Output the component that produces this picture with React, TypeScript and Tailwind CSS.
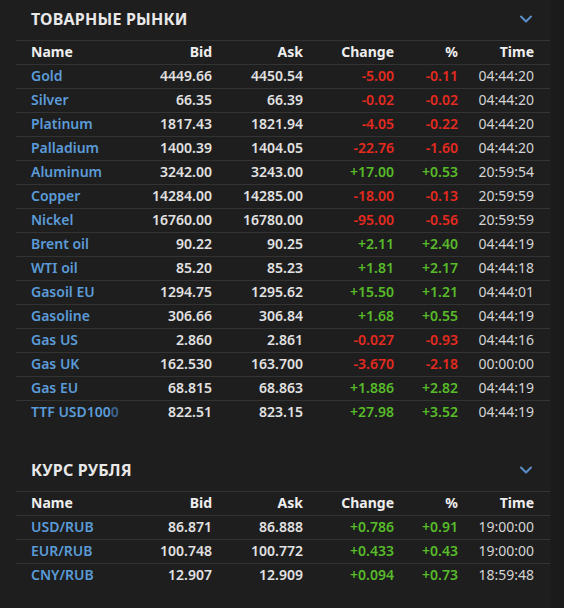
import React from 'react';

type Row = {
  name: string;
  bid: string;
  ask: string;
  change: string;
  pct: string;
  time: string;
};

const commodities: Row[] = [
  { name: 'Gold', bid: '4449.66', ask: '4450.54', change: '-5.00', pct: '-0.11', time: '04:44:20' },
  { name: 'Silver', bid: '66.35', ask: '66.39', change: '-0.02', pct: '-0.02', time: '04:44:20' },
  { name: 'Platinum', bid: '1817.43', ask: '1821.94', change: '-4.05', pct: '-0.22', time: '04:44:20' },
  { name: 'Palladium', bid: '1400.39', ask: '1404.05', change: '-22.76', pct: '-1.60', time: '04:44:20' },
  { name: 'Aluminum', bid: '3242.00', ask: '3243.00', change: '+17.00', pct: '+0.53', time: '20:59:54' },
  { name: 'Copper', bid: '14284.00', ask: '14285.00', change: '-18.00', pct: '-0.13', time: '20:59:59' },
  { name: 'Nickel', bid: '16760.00', ask: '16780.00', change: '-95.00', pct: '-0.56', time: '20:59:59' },
  { name: 'Brent oil', bid: '90.22', ask: '90.25', change: '+2.11', pct: '+2.40', time: '04:44:19' },
  { name: 'WTI oil', bid: '85.20', ask: '85.23', change: '+1.81', pct: '+2.17', time: '04:44:18' },
  { name: 'Gasoil EU', bid: '1294.75', ask: '1295.62', change: '+15.50', pct: '+1.21', time: '04:44:01' },
  { name: 'Gasoline', bid: '306.66', ask: '306.84', change: '+1.68', pct: '+0.55', time: '04:44:19' },
  { name: 'Gas US', bid: '2.860', ask: '2.861', change: '-0.027', pct: '-0.93', time: '04:44:16' },
  { name: 'Gas UK', bid: '162.530', ask: '163.700', change: '-3.670', pct: '-2.18', time: '00:00:00' },
  { name: 'Gas EU', bid: '68.815', ask: '68.863', change: '+1.886', pct: '+2.82', time: '04:44:19' },
  { name: 'TTF USD1000', bid: '822.51', ask: '823.15', change: '+27.98', pct: '+3.52', time: '04:44:19' },
];

const rub: Row[] = [
  { name: 'USD/RUB', bid: '86.871', ask: '86.888', change: '+0.786', pct: '+0.91', time: '19:00:00' },
  { name: 'EUR/RUB', bid: '100.748', ask: '100.772', change: '+0.433', pct: '+0.43', time: '19:00:00' },
  { name: 'CNY/RUB', bid: '12.907', ask: '12.909', change: '+0.094', pct: '+0.73', time: '18:59:48' },
];

const cols = 'grid grid-cols-[134px_62px_91px_91px_64px_92px] h-6 items-center border-t border-[#333333] pb-[2px]';

function Chevron() {
  return (
    <svg width="14" height="10" viewBox="0 0 14 10" className="mr-[18px]">
      <path d="M2 2.5 L7 7.5 L12 2.5" fill="none" stroke="#5b8fc9" strokeWidth="2" strokeLinecap="round" strokeLinejoin="round" />
    </svg>
  );
}

function Section({ title, rows }: { title: string; rows: Row[] }) {
  return (
    <div>
      <div className="flex h-10 items-center justify-between pb-[2px]">
        <h2 className="pl-[31px] text-[16px] font-bold tracking-[0.2px] text-[#e8e8e8]">{title}</h2>
        <Chevron />
      </div>
      <div className="ml-4 w-[534px] text-[14px]">
        <div className={`${cols} font-bold text-[#eeeeee]`}>
          <div className="pl-[15px]">Name</div>
          <div className="text-right">Bid</div>
          <div className="text-right">Ask</div>
          <div className="text-right">Change</div>
          <div className="text-right">%</div>
          <div className="pr-4 text-right">Time</div>
        </div>
        {rows.map((r) => {
          const up = r.change.startsWith('+');
          const tone = up ? 'text-[#58bb2a]' : 'text-[#e52a1f]';
          return (
            <div key={r.name} className={cols}>
              <div className="pl-[15px] font-semibold text-[#5b9bd8]">
                {r.name === 'TTF USD1000' ? (
                  <>
                    TTF USD100<span className="text-[#3d6490]">0</span>
                  </>
                ) : (
                  r.name
                )}
              </div>
              <div className="text-right font-semibold text-[#e2e2e2]">{r.bid}</div>
              <div className="text-right font-semibold text-[#e2e2e2]">{r.ask}</div>
              <div className={`text-right font-semibold ${tone}`}>{r.change}</div>
              <div className={`text-right font-semibold ${tone}`}>{r.pct}</div>
              <div className="pr-4 text-right text-[#d4d4d4]">{r.time}</div>
            </div>
          );
        })}
      </div>
    </div>
  );
}

export default function App() {
  return (
    <div className="flex h-[608px] w-[564px] bg-[#1b1b1b] font-['Noto_Sans',sans-serif]">
      <div className="w-[551px] bg-[#1e1e1e]">
        <Section title="ТОВАРНЫЕ РЫНКИ" rows={commodities} />
        <div className="h-[27px]" />
        <Section title="КУРС РУБЛЯ" rows={rub} />
      </div>
    </div>
  );
}
